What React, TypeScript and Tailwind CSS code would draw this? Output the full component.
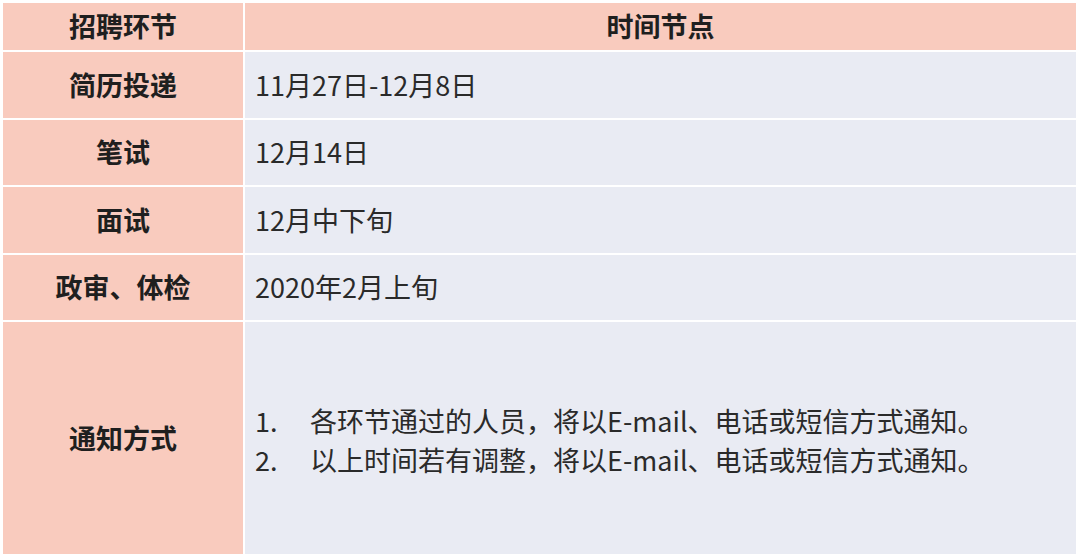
const rows = [
  { label: '简历投递', value: '11月27日-12月8日' },
  { label: '笔试', value: '12月14日' },
  { label: '面试', value: '12月中下旬' },
  { label: '政审、体检', value: '2020年2月上旬' },
]

const font = { fontFamily: '"Noto Sans CJK SC", "Noto Sans", sans-serif' }

export default function App() {
  return (
    <div className="w-[1080px] h-[558px] bg-white p-[3px]" style={font}>
      <div className="grid grid-cols-[240px_831px] grid-rows-[47px_66px_65px_66px_65px_232px] gap-[2px] text-[#1f1f1f]">
        {/* header */}
        <div className="bg-[#f9cbbe] flex items-center justify-center text-[27px] font-bold">招聘环节</div>
        <div className="bg-[#f9cbbe] flex items-center justify-center text-[27px] font-bold">时间节点</div>

        {rows.map((r) => (
          <Row key={r.label} label={r.label} value={r.value} />
        ))}

        {/* 通知方式 */}
        <div className="bg-[#f9cbbe] flex items-center justify-center text-[27px] font-bold">通知方式</div>
        <div className="bg-[#e9ebf3] flex flex-col justify-center pl-[10px] pt-[4px] text-[27px] leading-[39px] text-[#2a2a2a]">
          <div className="flex">
            <span className="w-[55px]">1.</span>
            <span>各环节通过的人员，将以E-mail、电话或短信方式通知。</span>
          </div>
          <div className="flex">
            <span className="w-[55px]">2.</span>
            <span>以上时间若有调整，将以E-mail、电话或短信方式通知。</span>
          </div>
        </div>
      </div>
    </div>
  )
}

function Row({ label, value }: { label: string; value: string }) {
  return (
    <>
      <div className="bg-[#f9cbbe] flex items-center justify-center text-[27px] font-bold">{label}</div>
      <div className="bg-[#e9ebf3] flex items-center pl-[10px] text-[27px] text-[#2a2a2a]">{value}</div>
    </>
  )
}
